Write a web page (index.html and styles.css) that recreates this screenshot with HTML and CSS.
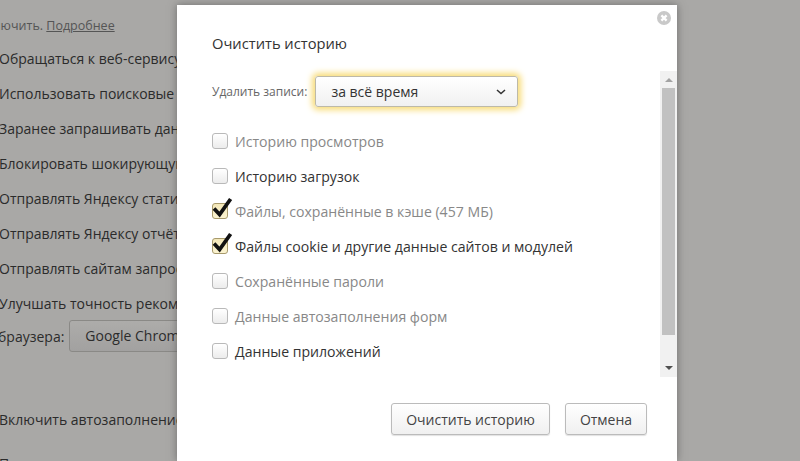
FILE: index.html
```html
<!DOCTYPE html>
<html lang="ru">
<head>
<meta charset="utf-8">
<title>Очистить историю</title>
<link rel="stylesheet" href="styles.css">
</head>
<body>
<main class="settings">
  <p class="row row-first">ключить. <a class="more">Подробнее</a></p>
  <p class="row">Обращаться к веб-сервису для разрешения проблем</p>
  <p class="row">Использовать поисковые подсказки</p>
  <p class="row">Заранее запрашивать данные страниц</p>
  <p class="row">Блокировать шокирующую рекламу</p>
  <p class="row">Отправлять Яндексу статистику</p>
  <p class="row">Отправлять Яндексу отчёты</p>
  <p class="row">Отправлять сайтам запрос</p>
  <p class="row">Улучшать точность рекомендаций</p>
  <div class="browser-row"><span>браузера:</span><span class="bg-button">Google Chrome</span></div>
  <p class="row row-gap">Включить автозаполнение форм</p>
  <p class="row">Предлагать сохранять пароли</p>
</main>
<section class="dialog">
  <svg class="close" viewBox="0 0 14 14" width="14" height="14" aria-hidden="true"><circle cx="7" cy="7" r="7" fill="#c9c9c9"/><path d="M4.4 4.4l5.2 5.2M9.6 4.4l-5.2 5.2" stroke="#fff" stroke-width="2.3" fill="none"/></svg>
  <h1 class="title">Очистить историю</h1>
  <div class="period">
    <span class="period-label">Удалить записи:</span>
    <div class="select"><span>за всё время</span>
      <svg viewBox="0 0 10 6" width="10" height="6" aria-hidden="true"><path d="M1 1l4 3.6L9 1" stroke="#333" stroke-width="1.5" fill="none"/></svg>
    </div>
  </div>
  <ul class="options">
    <li class="option muted"><span class="box"></span>Историю просмотров</li>
    <li class="option"><span class="box"></span>Историю загрузок</li>
    <li class="option muted"><span class="box checked"><svg class="tick" viewBox="0 0 22 22" width="22" height="22" aria-hidden="true"><path d="M2 11.5l5.6 6L18.6 2" stroke="#111" stroke-width="3.8" fill="none"/></svg></span>Файлы, сохранённые в кэше (457 МБ)</li>
    <li class="option"><span class="box checked"><svg class="tick" viewBox="0 0 22 22" width="22" height="22" aria-hidden="true"><path d="M2 11.5l5.6 6L18.6 2" stroke="#111" stroke-width="3.8" fill="none"/></svg></span>Файлы cookie и другие данные сайтов и модулей</li>
    <li class="option muted"><span class="box"></span>Сохранённые пароли</li>
    <li class="option muted"><span class="box"></span>Данные автозаполнения форм</li>
    <li class="option"><span class="box"></span>Данные приложений</li>
  </ul>
  <div class="actions">
    <button class="btn btn-clear">Очистить историю</button>
    <button class="btn btn-cancel">Отмена</button>
  </div>
  <div class="scrollbar">
    <span class="arrow arrow-up"></span>
    <span class="thumb"></span>
    <span class="arrow arrow-down"></span>
  </div>
</section>
</body>
</html>
```
FILE: styles.css
```css
* { box-sizing: border-box; }
html, body { margin: 0; height: 100%; overflow: hidden; }
body {
  background: #a9a8a6;
  font-family: "Open Sans", "Noto Sans", sans-serif;
  font-size: 14px;
  color: #2c2c2c;
  position: relative;
}
.settings { height: 100%; padding-top: 16px; white-space: nowrap; width: 177px; overflow: hidden; }
.row { margin: 0 0 15px -1px; height: 20px; line-height: 20px; color: #2b2b2b; }
.row-first { margin-left: -13px; margin-bottom: 13px; font-size: 12.5px; color: #555; }
.more { text-decoration: underline; }
.browser-row { display: flex; align-items: center; gap: 5px; margin-top: -9px; height: 32px; margin-left: -2px; }
.bg-button {
  flex: none; height: 32px; line-height: 30px; padding: 0 15px;
  border: 1px solid #8a8986; border-radius: 3px;
  background: linear-gradient(#adacaa, #a2a1a0);
}
.row-gap { margin-top: 58px; margin-bottom: 24px; }
.dialog {
  position: absolute; left: 177px; top: 5px; width: 500px; height: 456px;
  background: #fff; box-shadow: 0 0 8px rgba(60, 60, 60, .55);
  padding: 27px 35px 0;
}
.close { position: absolute; left: 480px; top: 6px; }
.title { margin: 0; font-size: 14.7px; font-weight: 400; line-height: 22px; color: #333; }
.period { display: flex; align-items: center; gap: 8px; margin-top: 22px; }
.period-label { font-size: 12px; color: #666; }
.select {
  display: flex; align-items: center; justify-content: space-between;
  width: 203px; height: 31px; padding: 0 11px 0 15px;
  border: 1px solid #bdb9a8; border-radius: 3px;
  background: linear-gradient(#fff, #f1f1f1);
  box-shadow: 0 0 6px 3px #f8dc78;
  font-size: 14px; color: #333;
}
.options { list-style: none; margin: 17px 0 0; padding: 0; }
.option { display: flex; align-items: center; gap: 7px; height: 35px; font-size: 14.1px; color: #333; }
.muted { color: #888; }
.box {
  position: relative; flex: none; width: 16px; height: 16px; margin-top: -1px;
  border: 1px solid #b9b9b9; border-radius: 3px;
  background: linear-gradient(#fff, #ececec);
}
.checked { background: linear-gradient(#f3e7b8, #fbf3d0); border-color: #a89a6c; }
.tick { position: absolute; left: -1px; top: -7px; }
.actions { position: absolute; left: 214px; top: 398px; display: flex; gap: 15px; }
.btn {
  height: 32px; padding: 0; border: 1px solid #bbb; border-radius: 3px;
  background: linear-gradient(#fff, #f0f0f0);
  box-shadow: 0 1px 1px rgba(0, 0, 0, .12);
  font: 14px "Open Sans", "Noto Sans", sans-serif; color: #444;
}
.btn-clear { width: 159px; }
.btn-cancel { width: 82px; }
.scrollbar {
  position: absolute; left: 483px; top: 66px; width: 17px; height: 306px;
  background: #f1f1f1; display: flex; flex-direction: column; align-items: center;
}
.thumb { width: 13px; height: 247px; background: #c1c1c1; margin: 0 0 31px; }
.arrow { width: 0; height: 0; border-left: 4px solid transparent; border-right: 4px solid transparent; }
.arrow-up { border-bottom: 4px solid #a3a3a3; margin: 7px 0 6px; }
.arrow-down { border-top: 4px solid #505050; }
```
